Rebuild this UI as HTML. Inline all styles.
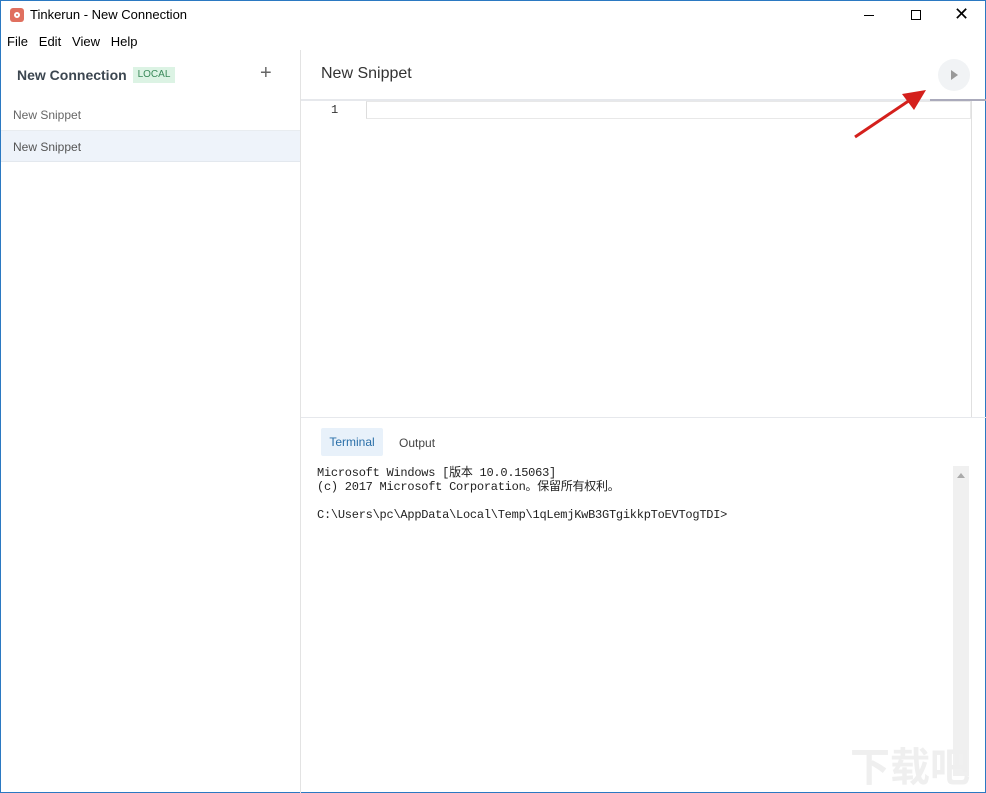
<!DOCTYPE html>
<html><head><meta charset="utf-8"><style>
*{margin:0;padding:0;box-sizing:border-box}
body{width:986px;height:793px;overflow:hidden;background:#fff;font-family:"Liberation Sans","Noto Sans CJK SC",sans-serif;position:relative}
.frame{position:absolute;inset:0;border:1px solid #2b79c2;border-top:none}
.abs{position:absolute}
</style></head><body>
<div class="frame"></div>
<div class="abs" style="left:0;top:0;width:986px;height:1px;background:#2b79c2"></div>
<div class="abs" style="left:10px;top:8px;width:14px;height:14px;background:#e0705f;border-radius:3px"></div>
<div class="abs" style="left:14px;top:12px;width:6px;height:6px;border:2px solid #fff;border-radius:50%"></div>
<div class="abs" style="left:30px;top:7px;font-size:13px;color:#000">Tinkerun - New Connection</div>
<div class="abs" style="left:864px;top:15px;width:10px;height:1px;background:#000"></div>
<div class="abs" style="left:911px;top:10px;width:10px;height:10px;border:1px solid #000"></div>
<div class="abs" style="left:954px;top:4px;font-size:18px;color:#000;font-weight:300">✕</div>
<div class="abs" style="left:7px;top:34px;font-size:13px;color:#000">File&nbsp;&nbsp;&nbsp;Edit&nbsp;&nbsp;&nbsp;View&nbsp;&nbsp;&nbsp;Help</div>
<div class="abs" style="left:300px;top:50px;width:1px;height:743px;background:#e3e3e3"></div>
<div class="abs" style="left:17px;top:67px;font-size:14px;font-weight:bold;color:#3c4650">New Connection</div>
<div class="abs" style="left:133px;top:67px;width:42px;height:16px;background:#dcf3e4;color:#3a8a5a;font-size:10px;line-height:16px;text-align:center">LOCAL</div>
<div class="abs" style="left:260px;top:62px;font-size:20px;color:#666;font-weight:300">+</div>
<div class="abs" style="left:1px;top:130px;width:299px;height:1px;background:#e8ecf0"></div>
<div class="abs" style="left:13px;top:108px;font-size:12px;color:#666">New Snippet</div>
<div class="abs" style="left:1px;top:131px;width:299px;height:31px;background:#eef3fa;border-bottom:1px solid #e3e8ee"></div>
<div class="abs" style="left:13px;top:140px;font-size:12px;color:#555">New Snippet</div>
<div class="abs" style="left:321px;top:65px;font-size:16px;color:#333">New Snippet</div>
<div class="abs" style="left:938px;top:59px;width:32px;height:32px;border-radius:50%;background:#f1f3f5"></div>
<div class="abs" style="left:951px;top:70px;width:0;height:0;border-left:7px solid #999;border-top:5px solid transparent;border-bottom:5px solid transparent"></div>
<div class="abs" style="left:301px;top:99px;width:685px;height:2px;background:#e6e8ec"></div>
<div class="abs" style="left:930px;top:99px;width:56px;height:2px;background:#aab"></div>
<div class="abs" style="left:331px;top:103px;font-size:12px;color:#333;font-family:'Liberation Mono',monospace">1</div>
<div class="abs" style="left:366px;top:101px;width:605px;height:18px;border:1px solid #e8e8e8;border-left:1px solid #ddd"></div>
<div class="abs" style="left:971px;top:101px;width:1px;height:316px;background:#e0e0e0"></div>
<div class="abs" style="left:301px;top:417px;width:685px;height:1px;background:#e6e8ec"></div>
<svg class="abs" style="left:850px;top:82px" width="80" height="60"><line x1="5" y1="55" x2="60" y2="18" stroke="#d4201c" stroke-width="3"/><polygon points="76,8 52,12 64,28" fill="#d4201c"/></svg>
<div class="abs" style="left:321px;top:428px;width:62px;height:28px;background:#e8f1fa;border-radius:2px;color:#2a6fa8;font-size:12px;line-height:28px;text-align:center">Terminal</div>
<div class="abs" style="left:399px;top:436px;font-size:12px;color:#444">Output</div>
<div class="abs" style="left:317px;top:466px;font-size:12px;line-height:14px;color:#222;font-family:'Liberation Mono','Noto Sans CJK SC',monospace;white-space:pre;letter-spacing:-0.25px">Microsoft Windows [版本 10.0.15063]
(c) 2017 Microsoft Corporation。保留所有权利。

C:\Users\pc\AppData\Local\Temp\1qLemjKwB3GTgikkpToEVTogTDI></div>
<div class="abs" style="left:953px;top:466px;width:16px;height:310px;background:#f0f0f0"></div>
<div class="abs" style="left:957px;top:473px;width:0;height:0;border-bottom:5px solid #aaa;border-left:4px solid transparent;border-right:4px solid transparent"></div>
<div class="abs" style="left:850px;top:735px;font-size:40px;color:#efefef;font-weight:bold;font-family:'Noto Sans CJK SC',sans-serif">下载吧</div>
</body></html>
